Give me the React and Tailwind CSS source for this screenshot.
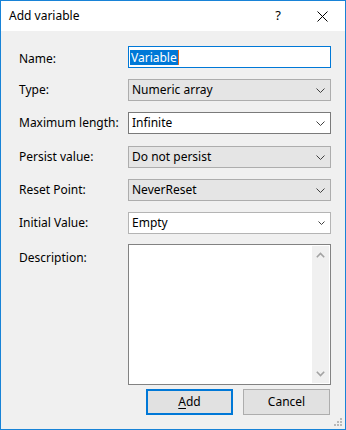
import React from 'react'

const font = { fontFamily: '"Noto Sans", "Liberation Sans", sans-serif' }

const Chevron = ({ small }) => (
  <svg width={small ? 7 : 9} height={small ? 4 : 5} viewBox={small ? '0 0 7 4' : '0 0 9 5'} className="shrink-0">
    <path
      d={small ? 'M0.5 0.5 L3.5 3.5 L6.5 0.5' : 'M0.5 0.5 L4.5 4.5 L8.5 0.5'}
      fill="none"
      stroke="#404040"
      strokeWidth="1"
    />
  </svg>
)

const Row = ({ label, children, className = '' }) => (
  <div className={`flex items-center ${className}`}>
    <div className="w-[127px] shrink-0 whitespace-nowrap pl-[18px] text-[12px] leading-[16px] text-black">{label}</div>
    {children}
  </div>
)

const Combo = ({ value }) => (
  <div className="w-[203px] h-[22px] shrink-0 flex items-center justify-between bg-[#e5e5e5] border border-[#adadad] pl-[3px] pr-[5px] text-[12px] text-black">
    <span>{value}</span>
    <Chevron />
  </div>
)

const EditCombo = ({ value, light }) => (
  <div
    className={`w-[203px] h-[22px] shrink-0 flex items-center justify-between bg-white border pl-[3px] pr-[5px] text-[12px] text-black ${
      light ? 'border-[#b4b4b4]' : 'border-[#7a7a7a]'
    }`}
  >
    <span>{value}</span>
    <Chevron small={light} />
  </div>
)

export default function App() {
  return (
    <div style={font} className="relative w-[346px] h-[430px] flex flex-col border border-[#1883d7] bg-[#f0f0f0] select-none">
      {/* title bar */}
      <div className="h-[30px] bg-white flex items-center shrink-0">
        <span className="pl-[8px] text-[12px] text-black">Add variable</span>
        <div className="flex-1" />
        <span className="text-[13px] text-black mr-[36px]">?</span>
        <svg width="11" height="11" viewBox="0 0 11 11" className="mr-[17px]">
          <path d="M0.5 0.5 L10.5 10.5 M10.5 0.5 L0.5 10.5" stroke="#000" strokeWidth="1" />
        </svg>
      </div>

      {/* form */}
      <div className="flex flex-col pt-[15px]">
        <Row label={<span className="relative top-[2px]">Name:</span>}>
          <div className="w-[203px] h-[22px] shrink-0 flex items-center bg-white border border-[#0078d7] pl-[1px] text-[12px]">
            <span className="bg-[#0078d7] text-white px-[1px] leading-[15px]">Variable</span>
            <span className="w-[1px] h-[15px] bg-[#e86b1f]" />
          </div>
        </Row>
        <Row label="Type:" className="mt-[11px]">
          <Combo value="Numeric array" />
        </Row>
        <Row label="Maximum length:" className="mt-[11px]">
          <EditCombo value="Infinite" />
        </Row>
        <Row label="Persist value:" className="mt-[12px]">
          <Combo value="Do not persist" />
        </Row>
        <Row label="Reset Point:" className="mt-[11px]">
          <Combo value="NeverReset" />
        </Row>
        <Row label="Initial Value:" className="mt-[11px]">
          <EditCombo value="Empty" light />
        </Row>
        <div className="flex mt-[10px]">
          <div className="w-[127px] shrink-0 pl-[18px] pt-[6px] text-[12px] leading-[16px] text-black">Description:</div>
          <div className="w-[203px] h-[141px] shrink-0 bg-white border border-[#828282] flex justify-end p-[1px]">
            <div className="w-[17px] h-full bg-[#f0f0f0] flex flex-col items-center justify-between py-[6px]">
              <svg width="9" height="6" viewBox="0 0 9 6">
                <path d="M0.8 5.2 L4.5 1.5 L8.2 5.2" fill="none" stroke="#a3a3a3" strokeWidth="1.6" />
              </svg>
              <svg width="9" height="6" viewBox="0 0 9 6">
                <path d="M0.8 0.8 L4.5 4.5 L8.2 0.8" fill="none" stroke="#a3a3a3" strokeWidth="1.6" />
              </svg>
            </div>
          </div>
        </div>

        {/* buttons */}
        <div className="flex justify-end gap-[10px] mt-[4px] pr-[15px]">
          <button className="w-[87px] h-[26px] bg-[#e1e1e1] border-2 border-[#0078d7] text-[12px] text-black">
            <span className="underline underline-offset-2">A</span>dd
          </button>
          <button className="w-[87px] h-[26px] bg-[#e1e1e1] border border-[#adadad] text-[12px] text-black">
            Cancel
          </button>
        </div>
      </div>

      {/* resize grip */}
      <svg width="8" height="8" viewBox="0 0 8 8" className="absolute right-[3px] bottom-[3px]">
        <rect x="6" y="0" width="2" height="2" fill="#b8b8b8" />
        <rect x="3" y="3" width="2" height="2" fill="#b8b8b8" />
        <rect x="6" y="3" width="2" height="2" fill="#b8b8b8" />
        <rect x="0" y="6" width="2" height="2" fill="#b8b8b8" />
        <rect x="3" y="6" width="2" height="2" fill="#b8b8b8" />
        <rect x="6" y="6" width="2" height="2" fill="#b8b8b8" />
      </svg>
    </div>
  )
}
